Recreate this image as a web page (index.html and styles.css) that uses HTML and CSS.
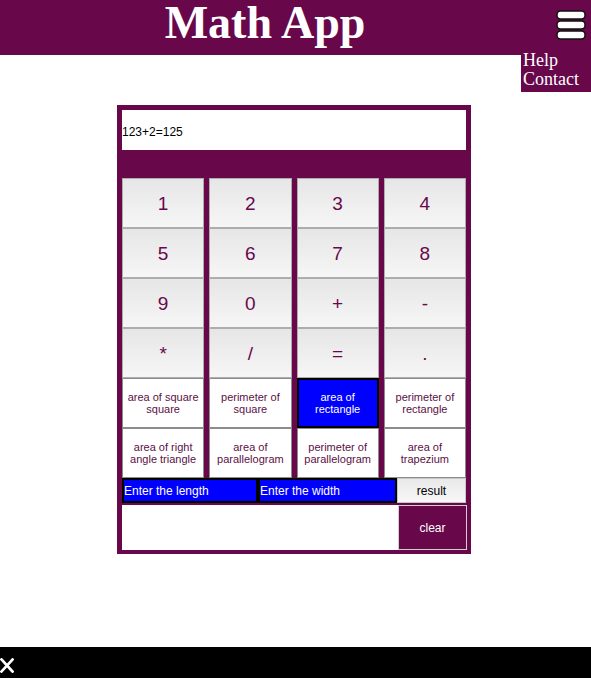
FILE: index.html
```html
<!DOCTYPE html>
<html lang="en">
<head>
<meta charset="utf-8">
<title>Math App</title>
<link rel="stylesheet" href="styles.css">
</head>
<body>
<header class="topbar">
  <h1 class="title">Math App</h1>
  <nav class="nav">
    <button class="burger" aria-label="Menu">
      <svg width="30" height="30" viewBox="0 0 30 30">
        <rect x="1" y="1" width="28" height="8" rx="3.5" fill="#fff" stroke="#111" stroke-width="1.5"/>
        <rect x="1" y="11" width="28" height="8" rx="3.5" fill="#fff" stroke="#111" stroke-width="1.5"/>
        <rect x="1" y="21" width="28" height="8" rx="3.5" fill="#fff" stroke="#111" stroke-width="1.5"/>
      </svg>
    </button>
    <ul class="menu">
      <li>Help</li>
      <li>Contact</li>
    </ul>
  </nav>
</header>

<main class="calc">
  <div class="display">123+2=125</div>
  <div class="keys">
    <button class="key">1</button>
    <button class="key">2</button>
    <button class="key">3</button>
    <button class="key">4</button>
    <button class="key">5</button>
    <button class="key">6</button>
    <button class="key">7</button>
    <button class="key">8</button>
    <button class="key">9</button>
    <button class="key">0</button>
    <button class="key">+</button>
    <button class="key">-</button>
    <button class="key">*</button>
    <button class="key">/</button>
    <button class="key">=</button>
    <button class="key">.</button>
    <button class="shape">area of square<br>square</button>
    <button class="shape">perimeter of<br>square</button>
    <button class="shape selected">area of<br>rectangle</button>
    <button class="shape">perimeter of<br>rectangle</button>
    <button class="shape">area of right<br>angle triangle</button>
    <button class="shape">area of<br>parallelogram</button>
    <button class="shape">perimeter of<br>parallelogram</button>
    <button class="shape">area of<br>trapezium</button>
  </div>
  <div class="inputs">
    <input class="field" placeholder="Enter the length">
    <input class="field" placeholder="Enter the width">
    <button class="result">result</button>
  </div>
  <div class="output">
    <div class="out-area"></div>
    <button class="clear">clear</button>
  </div>
</main>

<footer class="bottombar">
  <svg class="close" width="14" height="15" viewBox="0 0 14 15">
    <path d="M1.5 1.5 L12.5 13.5 M12.5 1.5 L1.5 13.5" stroke="#fff" stroke-width="2.6" stroke-linecap="square"/>
  </svg>
</footer>
</body>
</html>
```

FILE: styles.css
```css
* { box-sizing: border-box; }

body {
  margin: 0;
  font-family: "Liberation Sans", Arial, sans-serif;
  background: #fff;
}

.topbar {
  height: 55px;
  background: #68084b;
  display: flex;
  position: relative;
}

.title {
  flex: 1;
  margin: 0;
  text-align: center;
  font-family: "Liberation Serif", "Times New Roman", serif;
  font-weight: bold;
  font-size: 46px;
  line-height: 46px;
  color: #fff;
  white-space: nowrap;
}

.nav {
  width: 61px;
}

.burger {
  display: block;
  margin: 10px 0 0 26px;
  padding: 0;
  border: 0;
  background: none;
  width: 30px;
  height: 30px;
}

.burger svg { display: block; }

.menu {
  position: absolute;
  top: 51px;
  right: 0;
  width: 70px;
  margin: 0;
  padding: 0 0 3px 2px;
  list-style: none;
  background: #68084b;
  color: #fff;
  font-family: "Liberation Serif", "Times New Roman", serif;
  font-size: 18px;
  line-height: 19px;
}

.calc {
  width: 354px;
  margin: 50px 0 0 117px;
  padding: 5px 5px 4px 5px;
  background: #68084b;
  display: flex;
  flex-direction: column;
}

.display {
  height: 40px;
  background: #fff;
  display: flex;
  align-items: center;
  padding-top: 3px;
  font-size: 12px;
  color: #000;
  margin-bottom: 28px;
}

.keys {
  display: grid;
  grid-template-columns: repeat(4, 1fr);
  grid-auto-rows: 50px;
  column-gap: 5px;
}

.key {
  margin: 0;
  border: 1px solid #adadad;
  background: linear-gradient(#e6e6e6, #f6f6f6);
  color: #68084b;
  font-family: "Liberation Sans", Arial, sans-serif;
  font-size: 19px;
  padding: 2px 0 0;
}

.shape {
  margin: 0;
  border: 1px solid #8c8c8c;
  background: #fff;
  color: #5c1046;
  font-family: "Liberation Sans", Arial, sans-serif;
  font-size: 11px;
  line-height: 12px;
  padding: 0;
}

.shape.selected {
  background: #0000ff;
  border: 2px solid #000;
  color: #fff;
}

.inputs {
  display: grid;
  grid-template-columns: 136px 139px 1fr;
  height: 25px;
}

.field {
  margin: 0;
  min-width: 0;
  height: 25px;
  border: 2px solid #000;
  background: #0000ff;
  color: #fff;
  padding: 0;
  font-family: "Liberation Sans", Arial, sans-serif;
  font-size: 12px;
}

.field::placeholder { color: #fff; opacity: 1; }

.result {
  margin: 0;
  border: 1px solid #c8c8c8;
  background: linear-gradient(#e9e9e9, #f7f7f7);
  color: #000;
  font-family: "Liberation Sans", Arial, sans-serif;
  font-size: 12px;
  padding: 0;
}

.output {
  display: flex;
  height: 45px;
  margin-top: 2px;
}

.out-area {
  flex: 1;
  background: #fff;
}

.clear {
  width: 69px;
  margin: 0 -1px 0 0;
  border: 1px solid #cfcfcf;
  background: #68084b;
  color: #fff;
  font-family: "Liberation Sans", Arial, sans-serif;
  font-size: 12px;
  padding: 0;
}

.bottombar {
  position: fixed;
  left: 0;
  right: 0;
  bottom: 0;
  height: 31px;
  background: #000;
  padding-top: 11px;
}

.close { display: block; }
```
